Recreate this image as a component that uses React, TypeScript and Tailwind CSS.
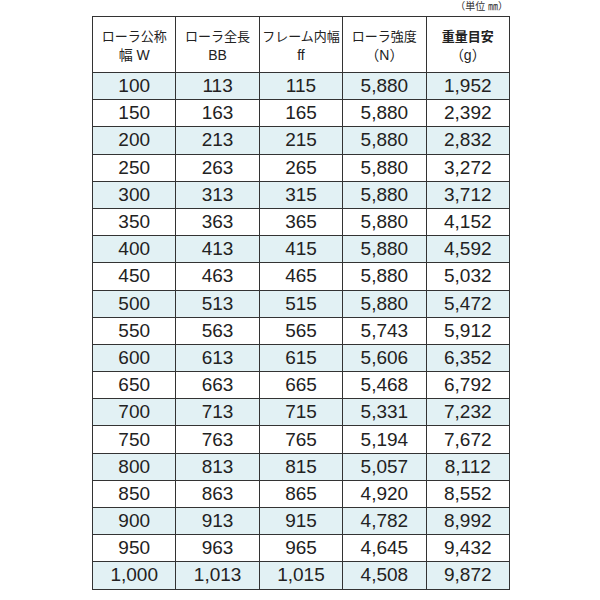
const rows: string[][] = [
  ["100", "113", "115", "5,880", "1,952"],
  ["150", "163", "165", "5,880", "2,392"],
  ["200", "213", "215", "5,880", "2,832"],
  ["250", "263", "265", "5,880", "3,272"],
  ["300", "313", "315", "5,880", "3,712"],
  ["350", "363", "365", "5,880", "4,152"],
  ["400", "413", "415", "5,880", "4,592"],
  ["450", "463", "465", "5,880", "5,032"],
  ["500", "513", "515", "5,880", "5,472"],
  ["550", "563", "565", "5,743", "5,912"],
  ["600", "613", "615", "5,606", "6,352"],
  ["650", "663", "665", "5,468", "6,792"],
  ["700", "713", "715", "5,331", "7,232"],
  ["750", "763", "765", "5,194", "7,672"],
  ["800", "813", "815", "5,057", "8,112"],
  ["850", "863", "865", "4,920", "8,552"],
  ["900", "913", "915", "4,782", "8,992"],
  ["950", "963", "965", "4,645", "9,432"],
  ["1,000", "1,013", "1,015", "4,508", "9,872"],
];

const headers: [string, string, boolean][] = [
  ["ローラ公称", "幅 W", false],
  ["ローラ全長", "BB", false],
  ["フレーム内幅", "ff", false],
  ["ローラ強度", "（N）", false],
  ["重量目安", "（g）", true],
];

export default function App() {
  return (
    <div
      className="w-[600px] h-[600px] bg-white text-[#222]"
      style={{ fontFamily: '"Liberation Sans", "Noto Sans CJK JP", sans-serif' }}
    >
      <div className="ml-[92px] w-[418px]">
        <div className="h-[16px] text-right text-[10px] leading-[14px] text-[#333] pr-[2px]">
          （単位 ㎜）
        </div>
        <table className="w-[418px] table-fixed border-collapse border border-[#333]">
          <thead>
            <tr className="h-[56px]">
              {headers.map(([a, b, bold]) => (
                <th
                  key={a}
                  className={`border border-[#333] text-[13px] leading-[18px] text-center align-middle p-0 pt-[3px] whitespace-nowrap ${
                    bold ? "font-semibold" : "font-normal"
                  }`}
                >
                  <div>{a}</div>
                  <div className="text-[14px] font-normal">{b}</div>
                </th>
              ))}
            </tr>
          </thead>
          <tbody>
            {rows.map((r, i) => (
              <tr
                key={r[0]}
                className={`h-[27.2px] ${i % 2 === 0 ? "bg-[#e2f1f4]" : "bg-white"}`}
              >
                {r.map((c, j) => (
                  <td
                    key={j}
                    className="border border-[#333] text-center text-[19px] leading-[22px] p-0"
                  >
                    {c}
                  </td>
                ))}
              </tr>
            ))}
          </tbody>
        </table>
      </div>
    </div>
  );
}
